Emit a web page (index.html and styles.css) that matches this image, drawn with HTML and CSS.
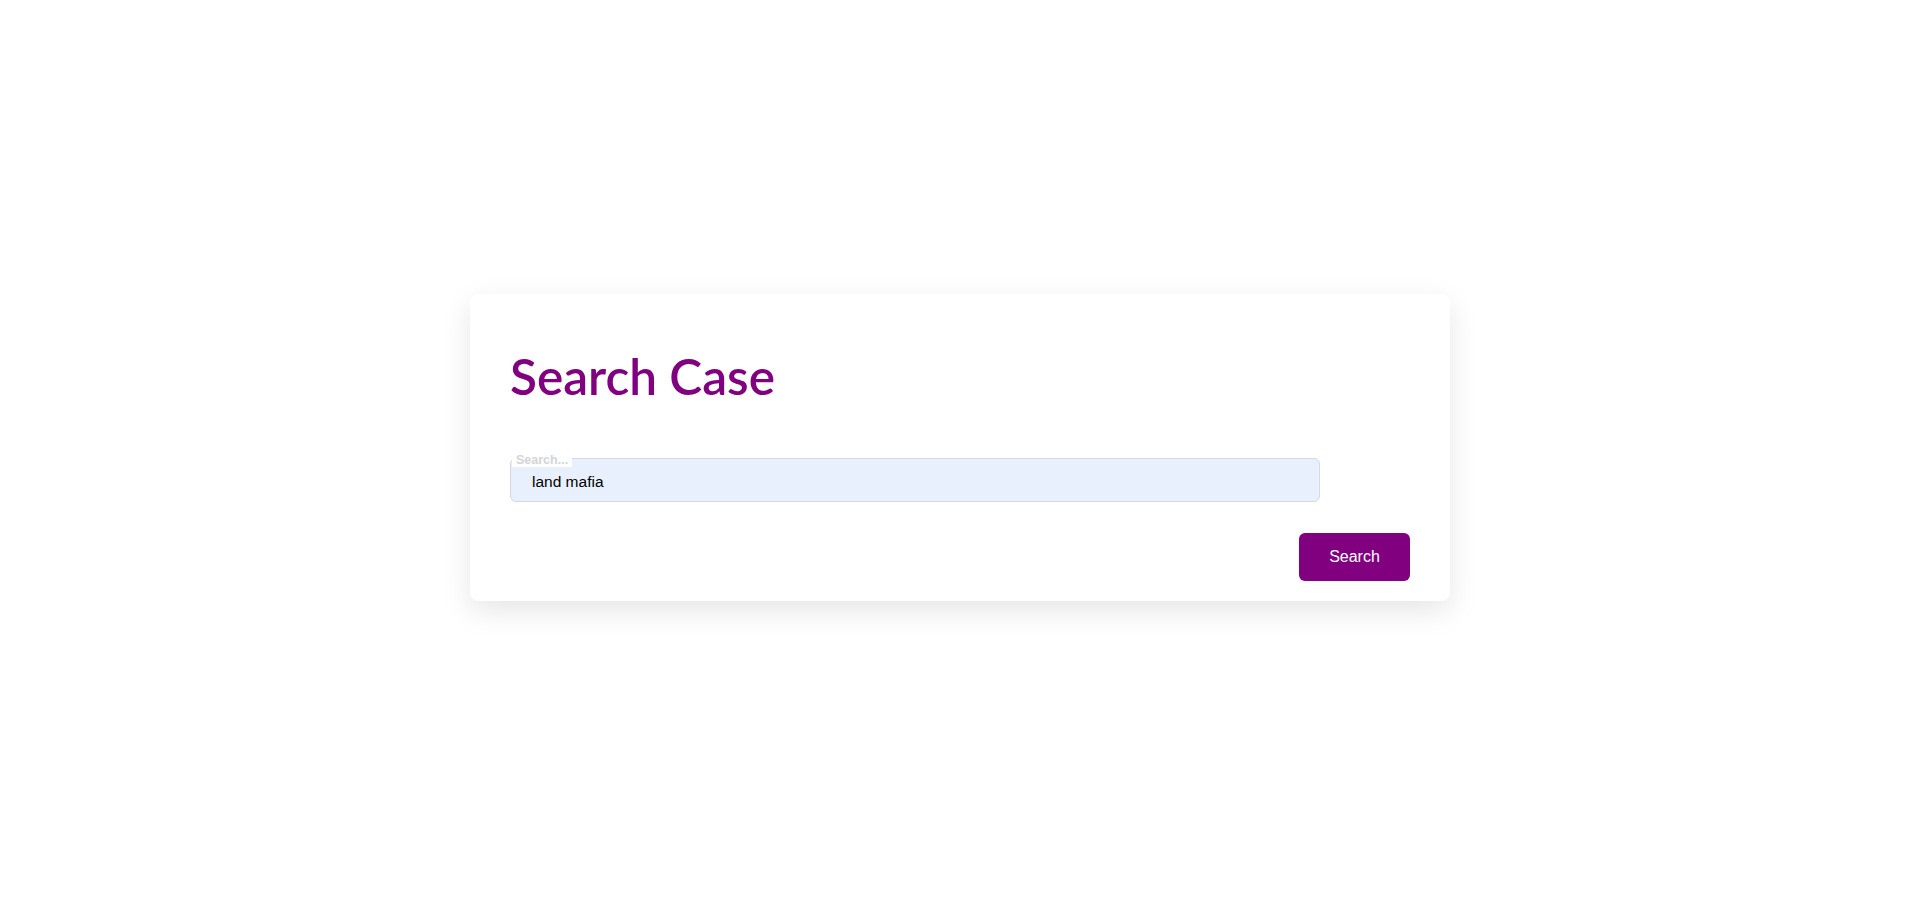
FILE: index.html
```html
<!DOCTYPE html>
<html lang="en">
<head>
<meta charset="utf-8">
<title>Search Case</title>
<link rel="stylesheet" href="styles.css">
</head>
<body>
<main class="page">
  <section class="card">
    <h1 class="title">Search Case</h1>
    <div class="field">
      <label class="field-label" for="q">Search...</label>
      <input class="field-input" id="q" type="text" value="land mafia">
    </div>
    <div class="actions">
      <button class="btn" type="button">Search</button>
    </div>
  </section>
</main>
</body>
</html>
```
FILE: styles.css
```css
html, body {
  margin: 0;
  padding: 0;
  background: #ffffff;
}
.page {
  height: 911px;
  display: flex;
  justify-content: center;
  padding-top: 294px;
  box-sizing: border-box;
}
.card {
  width: 980px;
  height: 307px;
  box-sizing: border-box;
  padding: 40px 40px 20px;
  background: #fff;
  border-radius: 8px;
  box-shadow: 0 10px 30px rgba(0, 0, 0, 0.1);
}
.title {
  margin: 14px 0 54px;
  font-family: Lato, "Open Sans", sans-serif;
  font-weight: 600;
  font-size: 49.5px;
  line-height: 56px;
  color: #800080;
}
.field {
  position: relative;
  width: 90%;
}
.field-label {
  position: absolute;
  left: 2px;
  top: -4px;
  padding: 0 4px;
  background: #fff;
  font-family: "Liberation Sans", Arial, sans-serif;
  font-size: 12.5px;
  font-weight: 700;
  line-height: 13px;
  color: #d4d4d8;
}
.field-input {
  display: block;
  width: 100%;
  height: 44px;
  box-sizing: border-box;
  padding: 4px 16px 0 21px;
  border: 1px solid #d4d8e0;
  border-radius: 6px;
  background: #e8f0fe;
  font-family: "Liberation Sans", Arial, sans-serif;
  font-size: 15.5px;
  color: #000;
  outline: none;
}
.actions {
  display: flex;
  justify-content: flex-end;
  margin-top: 31px;
}
.btn {
  width: 111px;
  height: 48px;
  border: none;
  border-radius: 6px;
  background: #800080;
  color: #fff;
  font-family: "Liberation Sans", Arial, sans-serif;
  font-size: 16px;
  cursor: pointer;
}
```
